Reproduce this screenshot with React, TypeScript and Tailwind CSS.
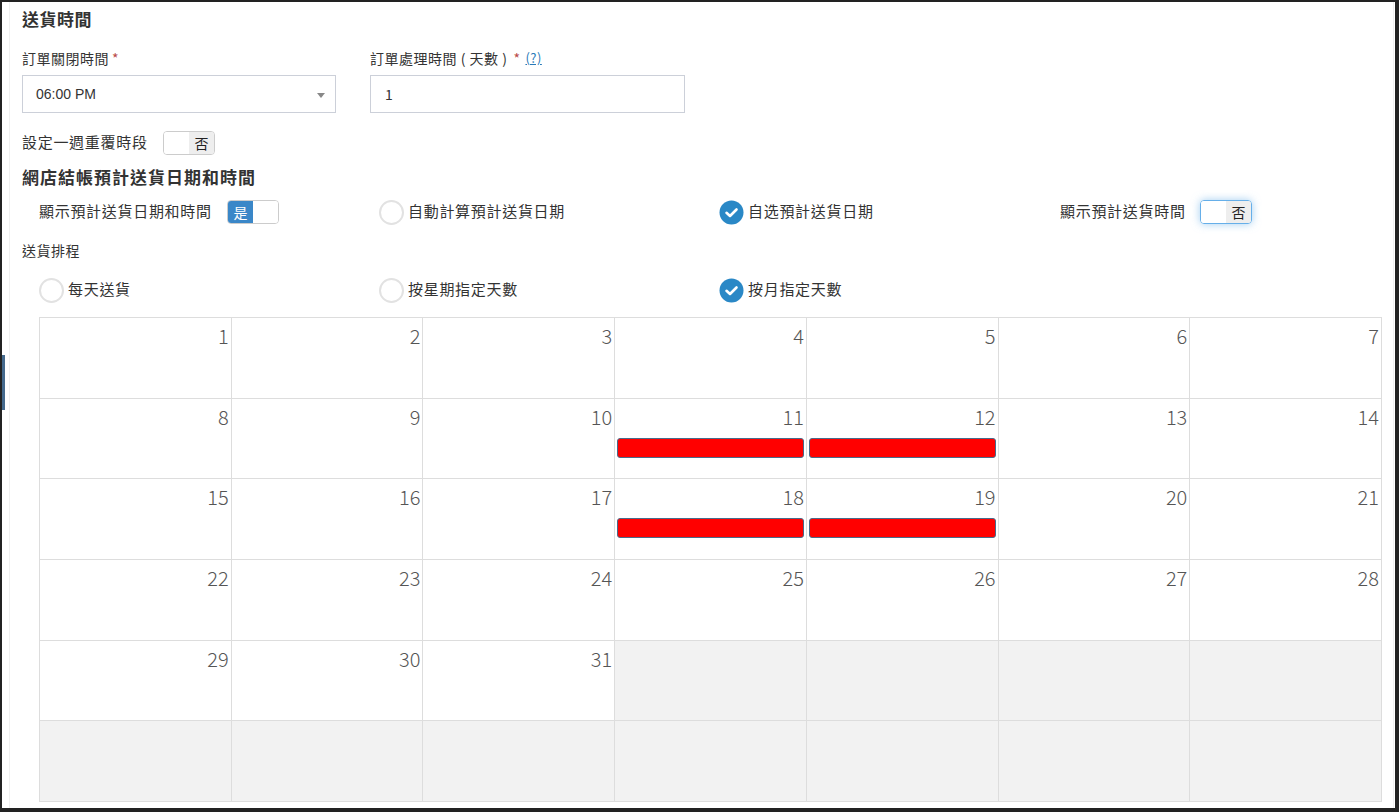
import React from "react";

const CJK = { fontFamily: '"Noto Sans CJK TC", "Noto Sans", sans-serif' };

function Radio({ checked, label }: { checked?: boolean; label: string }) {
  return (
    <div className="flex items-center h-[24px]">
      {checked ? (
        <svg width="25" height="25" viewBox="0 0 25 25" className="shrink-0">
          <circle cx="12.5" cy="12.5" r="12" fill="#2a88c6" />
          <path d="M7.5 12.8 L11 16 L17.5 9.5" fill="none" stroke="#fff" strokeWidth="2.6" strokeLinecap="round" strokeLinejoin="round" />
        </svg>
      ) : (
        <div className="w-[25px] h-[25px] rounded-full border-2 border-[#e2e2e2] bg-white shrink-0" />
      )}
      <span className="ml-[4px] text-[15px] tracking-[0.7px] text-[#333] leading-none relative -top-[2px]">{label}</span>
    </div>
  );
}

function Toggle({ on, focus }: { on?: boolean; focus?: boolean }) {
  return (
    <div
      className={
        "flex w-[52px] h-[24px] rounded-[4px] border overflow-hidden shrink-0 " +
        (focus ? "border-[#66afe9] shadow-[0_0_8px_rgba(102,175,233,0.6)]" : "border-[#cccccc]")
      }
    >
      {on ? (
        <>
          <div className="w-1/2 h-full bg-[#3a87c8] text-white text-[14px] flex items-center justify-center leading-none">是</div>
          <div className="w-1/2 h-full bg-white" />
        </>
      ) : (
        <>
          <div className="w-1/2 h-full bg-white" />
          <div className="w-1/2 h-full bg-[#eeeeee] text-[#222] text-[14px] flex items-center justify-center leading-none">否</div>
        </>
      )}
    </div>
  );
}

export default function App() {
  const cells: (number | null)[] = [];
  for (let i = 1; i <= 42; i++) cells.push(i <= 31 ? i : null);
  const marked = new Set([11, 12, 18, 19]);

  return (
    <div className="w-[1399px] h-[812px] bg-[#222222] pt-[2px] pl-[2px] pr-[4px] pb-[4px]" style={CJK}>
      <div className="relative w-full h-full bg-white">
        <div className="absolute left-[7px] top-0 bottom-0 w-[1px] bg-[#f0f0f0]" />
        <div className="absolute right-[1px] top-0 bottom-0 w-[1px] bg-[#f0f0f0]" />
        <div className="absolute left-0 top-[353px] w-[3px] h-[55px] bg-[#44698c]" />

        <div className="pl-[20px] pr-[13px]">
          <div className="h-[34px] flex items-center text-[17px] font-bold text-[#333] tracking-[0.5px]">送貨時間</div>

          <div className="flex mt-[12px]">
            <div className="w-[314px]">
              <div className="h-[20px] flex items-center text-[14px] tracking-[0.5px] text-[#333]">
                訂單關閉時間<span className="text-[#b94a48] ml-[3px]">*</span>
              </div>
              <div className="mt-[7px] h-[38px] border border-[#ccd0d9] flex items-center pl-[13px] pr-[10px] relative">
                <span className="text-[14px] text-[#333]" style={{ fontFamily: '"Liberation Sans", Arial, sans-serif' }}>06:00 PM</span>
                <svg width="8" height="5" viewBox="0 0 8 5" className="absolute right-[10px] top-[17px]">
                  <path d="M0 0 L8 0 L4 5 Z" fill="#888" />
                </svg>
              </div>
            </div>
            <div className="w-[315px] ml-[34px]">
              <div className="h-[20px] flex items-center text-[14px] tracking-[0.5px] text-[#333]">
                訂單處理時間 ( 天數 )<span className="text-[#b94a48] ml-[6px]">*</span>
                <span className="ml-[5px] text-[13px] text-[#2a7ab8] underline tracking-[0.5px]">(?)</span>
              </div>
              <div className="mt-[7px] h-[38px] border border-[#ccd0d9] flex items-center pl-[14px]">
                <span className="text-[14px] text-[#333]">1</span>
              </div>
            </div>
          </div>

          <div className="mt-[18px] h-[24px] flex items-center">
            <span className="text-[15px] tracking-[0.7px] text-[#333] w-[141px] relative -top-[1px]">設定一週重覆時段</span>
            <Toggle />
          </div>

          <div className="mt-[10px] h-[24px] flex items-center text-[17px] font-bold text-[#333] tracking-[1px]">網店結帳預計送貨日期和時間</div>

          <div className="mt-[11px] grid grid-cols-4 w-[1360px]">
            <div className="pl-[17px] flex items-center h-[24px]">
              <span className="text-[15px] tracking-[0.7px] text-[#333] w-[188px] relative -top-[1px]">顯示預計送貨日期和時間</span>
              <Toggle on />
            </div>
            <div className="pl-[17px]"><Radio label="自動計算預計送貨日期" /></div>
            <div className="pl-[17px]"><Radio checked label="自选預計送貨日期" /></div>
            <div className="pl-[18px] flex items-center h-[24px]">
              <span className="text-[15px] tracking-[0.7px] text-[#333] w-[140px] relative -top-[1px]">顯示預計送貨時間</span>
              <Toggle focus />
            </div>
          </div>

          <div className="mt-[16px] h-[20px] flex items-center text-[14px] tracking-[0.5px] text-[#333]">送貨排程</div>

          <div className="mt-[18px] grid grid-cols-4 w-[1360px]">
            <div className="pl-[17px]"><Radio label="每天送貨" /></div>
            <div className="pl-[17px]"><Radio label="按星期指定天數" /></div>
            <div className="pl-[17px]"><Radio checked label="按月指定天數" /></div>
            <div />
          </div>

          <div className="mt-[15px] ml-[17px] w-[1343px] grid grid-cols-7 border-l border-t border-[#dddddd]">
            {cells.map((d, i) => (
              <div
                key={i}
                className={"h-[80.67px] border-r border-b border-[#dddddd] relative " + (d === null ? "bg-[#f2f2f2]" : "bg-white")}
              >
                {d !== null && (
                  <div className="text-right pr-[2px] pt-[3px] text-[20px] font-light text-[#555] leading-[30px]">{d}</div>
                )}
                {d !== null && marked.has(d) && (
                  <div className="absolute left-[2px] right-[2px] top-[39px] h-[20px] bg-[#ff0000] border border-[#4a6a8a] rounded-[3px]" />
                )}
              </div>
            ))}
          </div>
        </div>
      </div>
    </div>
  );
}
